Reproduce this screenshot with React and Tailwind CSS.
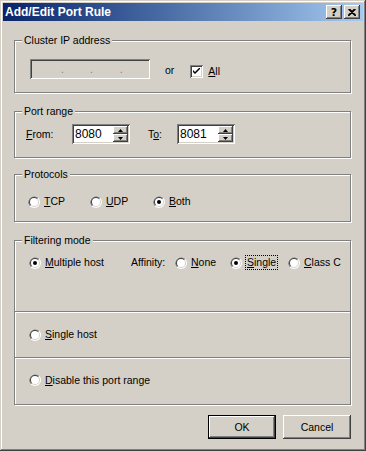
import React from "react";

const raised =
  "shadow-[inset_-1px_-1px_0_#404040,inset_1px_1px_0_#fff,inset_-2px_-2px_0_#808080,inset_2px_2px_0_#d4d0c8]";
const sunken =
  "shadow-[inset_1px_1px_0_#808080,inset_-1px_-1px_0_#fff,inset_2px_2px_0_#404040,inset_-2px_-2px_0_#d4d0c8]";

function Radio({ checked }) {
  return (
    <svg width="12" height="12" viewBox="0 0 12 12" className="shrink-0">
      <circle cx="6" cy="6" r="6" fill="#fff" />
      <path d="M10.24 1.76 A6 6 0 0 0 1.76 10.24 Z" fill="#808080" />
      <circle cx="6" cy="6" r="5" fill="#d4d0c8" />
      <path d="M9.54 2.46 A5 5 0 0 0 2.46 9.54 Z" fill="#404040" />
      <circle cx="6" cy="6" r="4" fill="#fff" />
      {checked && <circle cx="6" cy="6" r="2" fill="#000" />}
    </svg>
  );
}

function Option({ checked, children, className = "", focus }) {
  return (
    <div className={`flex items-center ${className}`}>
      <Radio checked={checked} />
      <span
        className={`ml-[4px] leading-[13px] whitespace-nowrap ${
          focus ? "outline outline-1 outline-dotted outline-black outline-offset-0 px-px -mx-px" : ""
        }`}
      >
        {children}
      </span>
    </div>
  );
}

function Group({ label, className = "", children }) {
  return (
    <div
      className={`relative border border-[#808080] shadow-[1px_1px_0_#fff,inset_1px_1px_0_#fff] ${className}`}
    >
      {label && (
        <span className="absolute left-[7px] top-[-7px] bg-[#d4d0c8] px-[2px] leading-[13px] whitespace-nowrap">
          {label}
        </span>
      )}
      {children}
    </div>
  );
}

function Arrow({ up }) {
  return (
    <svg width="5" height="3" viewBox="0 0 5 3">
      <polygon points={up ? "2.5,0 5,3 0,3" : "0,0 5,0 2.5,3"} fill="#000" />
    </svg>
  );
}

function SpinField({ value }) {
  return (
    <div className={`w-[58px] h-[20px] bg-white ${sunken} flex p-[2px]`}>
      <span className="flex-1 leading-[16px] pl-px text-[12px]">{value}</span>
      <div className="w-[15px] flex flex-col">
        <div className={`h-[8px] bg-[#d4d0c8] ${raised} flex items-center justify-center`}>
          <Arrow up />
        </div>
        <div className={`h-[8px] bg-[#d4d0c8] ${raised} flex items-center justify-center`}>
          <Arrow />
        </div>
      </div>
    </div>
  );
}

export default function App() {
  return (
    <div
      className="w-[366px] h-[451px] bg-[#d4d0c8] p-[3px] flex flex-col text-[10.5px] text-black font-['Liberation_Sans',Arial,sans-serif] shadow-[inset_-1px_-1px_0_#404040,inset_1px_1px_0_#d4d0c8,inset_-2px_-2px_0_#808080,inset_2px_2px_0_#fff]"
    >
      {/* Title bar */}
      <div className="h-[18px] flex items-center bg-linear-to-r from-[#0a246a] to-[#a6caf0] pl-[2px] pr-[3px]">
        <span className="text-white font-bold text-[12px] leading-[18px]">Add/Edit Port Rule</span>
        <div className="ml-auto flex gap-[2px]">
          <div className={`w-[16px] h-[14px] bg-[#d4d0c8] ${raised} flex items-center justify-center`}>
            <span className="font-bold text-[11px] leading-[11px] font-['DejaVu_Sans',sans-serif]">?</span>
          </div>
          <div className={`w-[16px] h-[14px] bg-[#d4d0c8] ${raised} flex items-center justify-center`}>
            <svg width="8" height="7" viewBox="0 0 8 7">
              <path d="M0.5 0 L7.5 7 M1.5 0 L8 6.5 M7.5 0 L0.5 7 M6.5 0 L0 6.5" stroke="#000" strokeWidth="1.2" />
            </svg>
          </div>
        </div>
      </div>

      <div className="pl-[11px] pr-[12px] flex flex-col">
        {/* Cluster IP address */}
        <Group label="Cluster IP address" className="mt-[19px] h-[53px]">
          <div className="pt-[18px] pl-[15px] flex items-center">
            <div className={`w-[120px] h-[20px] ${sunken} flex items-end pb-[1px] text-[#808080]`}>
              <span className="ml-[31px]">.</span>
              <span className="ml-[26px]">.</span>
              <span className="ml-[27px]">.</span>
            </div>
            <span className="ml-[15px] leading-[13px] mt-[2px]">or</span>
            <div className="ml-[16px] mt-[4px] w-[13px] h-[13px] bg-white shadow-[inset_1px_1px_0_#808080,inset_-1px_-1px_0_#fff,inset_2px_2px_0_#404040,inset_-2px_-2px_0_#d4d0c8] flex items-center justify-center">
              <svg width="7" height="7" viewBox="0 0 7 7">
                <path d="M0 2 L0 4 L2 6 L7 1 L7 -1 L2 4 Z" fill="#000" />
              </svg>
            </div>
            <span className="ml-[5px] leading-[13px] mt-[4px]">
              <u>A</u>ll
            </span>
          </div>
        </Group>

        {/* Port range */}
        <Group label="Port range" className="mt-[18px] h-[47px]">
          <div className="pt-[12px] pl-[11px] flex items-center">
            <span className="w-[46px] leading-[13px]">
              <u>F</u>rom:
            </span>
            <SpinField value="8080" />
            <span className="ml-[18px] w-[29px] leading-[13px]">
              T<u>o</u>:
            </span>
            <SpinField value="8081" />
          </div>
        </Group>

        {/* Protocols */}
        <Group label="Protocols" className="mt-[16px] h-[48px]">
          <div className="pt-[20px] pl-[13px] flex items-center">
            <Option className="w-[62px]">
              <u>T</u>CP
            </Option>
            <Option className="w-[63px]">
              <u>U</u>DP
            </Option>
            <Option checked>
              <u>B</u>oth
            </Option>
          </div>
        </Group>

        {/* Filtering mode */}
        <Group label="Filtering mode" className="mt-[18px] h-[165px] flex flex-col">
          <div className="h-[70px] pt-[15px] pl-[14px] flex items-start">
            <Option checked className="w-[102px]">
              <u>M</u>ultiple host
            </Option>
            <span className="w-[44px] leading-[13px]">Affinity:</span>
            <Option className="w-[55px]">
              <u>N</u>one
            </Option>
            <Option checked focus className="w-[58px]">
              <u>S</u>ingle
            </Option>
            <Option>
              <u>C</u>lass C
            </Option>
          </div>
          <div className="h-px bg-[#808080]" />
          <div className="h-px bg-white" />
          <div className="h-[44px] pl-[14px] pb-px flex items-center">
            <Option>
              <u>S</u>ingle host
            </Option>
          </div>
          <div className="h-px bg-[#808080]" />
          <div className="h-px bg-white" />
          <div className="flex-1 pl-[14px] pb-[3px] flex items-center">
            <Option>
              <u>D</u>isable this port range
            </Option>
          </div>
        </Group>

        {/* Buttons */}
        <div className="mt-[10px] flex justify-end gap-[7px]">
          <div className="w-[68px] h-[24px] border border-black">
            <div className={`w-full h-full ${raised} flex items-center justify-center leading-[13px]`}>OK</div>
          </div>
          <div className={`w-[68px] h-[24px] ${raised} flex items-center justify-center leading-[13px]`}>
            Cancel
          </div>
        </div>
      </div>
    </div>
  );
}
